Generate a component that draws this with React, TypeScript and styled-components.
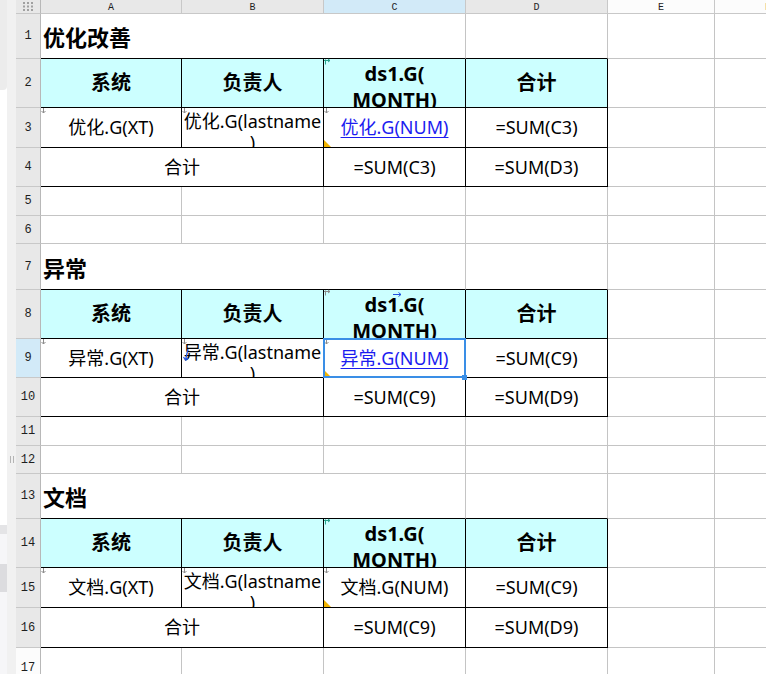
import React from 'react';
import styled, { createGlobalStyle, css } from 'styled-components';

const GlobalStyle = createGlobalStyle`
  html, body {
    margin: 0;
    padding: 0;
    background: #ffffff;
  }
  body {
    font-family: "Noto Sans", "Noto Sans CJK SC", sans-serif;
    color: #000;
  }
`;

const GRID_LINE = '#c4c4c4';
const HEAD_BG = '#e8e8e8';
const ACTIVE_BG = '#d2eaf8';
const CYAN = '#ccffff';
const SELECT = '#3a8ee6';
const LINK = '#1c1cf0';

// row header + A..F
const COL_WIDTHS = [25, 141, 142, 142, 142, 107, 107];
// column header + rows 1..17
const ROW_HEIGHTS = [14, 45, 49, 40, 39, 29, 28, 46, 49, 39, 39, 29, 28, 45, 49, 40, 40, 40];
const COL_NAMES = ['A', 'B', 'C', 'D', 'E', 'F'];

type Kind = 'title' | 'head' | 'data' | 'link' | 'blank';
type MarkKind = 'expand' | 'corner' | 'teal' | 'greyHead' | 'blueRight' | 'blueDown';

interface CellDef {
  text?: string;
  kind: Kind;
  span?: number;
  wrap?: boolean;
  edgeR?: boolean;
  edgeB?: boolean;
  fill?: string;
  marks?: MarkKind[];
  selected?: boolean;
}

const Page = styled.div`
  display: flex;
  width: 766px;
  height: 674px;
  overflow: hidden;
`;

const SidePane = styled.div`
  display: flex;
  flex: 0 0 16px;
`;

const SideEdge = styled.div`
  display: flex;
  flex-direction: column;
  width: 7px;
`;

const SideBlock = styled.div<{ $h?: number; $bg: string; $round?: boolean }>`
  flex: ${p => (p.$h ? `0 0 ${p.$h}px` : '1 1 auto')};
  background: ${p => p.$bg};
  border-bottom-right-radius: ${p => (p.$round ? '4px' : '0')};
`;

const Splitter = styled.div`
  flex: 1;
  background: #f1f1f1;
  display: flex;
  justify-content: center;
  padding-top: 456px;
  box-sizing: border-box;
`;

const Grip = styled.div`
  width: 4px;
  height: 7px;
  box-sizing: border-box;
  border-left: 1px solid #b4b4b4;
  border-right: 1px solid #b4b4b4;
`;

const Sheet = styled.div`
  display: grid;
  grid-template-columns: ${COL_WIDTHS.map(w => `${w}px`).join(' ')};
  grid-template-rows: ${ROW_HEIGHTS.map(h => `${h}px`).join(' ')};
  flex: 0 0 auto;
`;

const HeadCell = styled.div<{ $active?: boolean; $unused?: boolean }>`
  box-sizing: border-box;
  display: flex;
  align-items: center;
  justify-content: center;
  background: ${p => (p.$active ? ACTIVE_BG : p.$unused ? '#fcfcfc' : HEAD_BG)};
  border-right: 1px solid #c8c8c8;
  border-bottom: 1px solid #c8c8c8;
  font-family: "Liberation Mono", "DejaVu Sans Mono", monospace;
  color: #1e1e1e;
`;

const Corner = styled(HeadCell)`
  border-right-color: #b8b8b8;
`;

const ColHead = styled(HeadCell)`
  font-size: 10px;
  padding-top: 1px;
`;

const RowHead = styled(HeadCell)`
  font-size: 12px;
  border-right-color: #b8b8b8;
`;

const Cell = styled.div<{ $span: number; $edgeR: boolean; $edgeB: boolean; $fill: string }>`
  position: relative;
  box-sizing: border-box;
  min-width: 0;
  grid-column: span ${p => p.$span};
  background: ${p => p.$fill};
  border-right: 1px solid ${p => (p.$edgeR ? '#000' : GRID_LINE)};
  border-bottom: 1px solid ${p => (p.$edgeB ? '#000' : GRID_LINE)};
`;

const kindStyles = {
  title: css`
    justify-content: flex-start;
    padding-left: 2px;
    font-size: 22px;
    font-weight: 700;
  `,
  head: css`
    font-size: 20px;
    font-weight: 700;
    line-height: 26px;
  `,
  data: css`
    font-size: 18px;
    line-height: 21px;
  `,
  link: css`
    font-size: 18px;
    line-height: 21px;
    color: ${LINK};
    text-decoration: underline;
    text-underline-offset: 3px;
    text-decoration-thickness: 1px;
  `,
  blank: css``,
};

const Content = styled.div<{ $kind: Kind; $wrap: boolean }>`
  box-sizing: border-box;
  height: 100%;
  overflow: hidden;
  display: flex;
  justify-content: center;
  align-items: ${p => (p.$wrap ? 'flex-start' : 'center')};
  padding-top: ${p => (p.$wrap ? (p.$kind === 'head' ? '2px' : '3px') : '0')};
  white-space: pre;
  text-align: center;
  ${p => kindStyles[p.$kind]}
`;

const Marker = styled.svg<{ $top?: number; $left?: number; $bottom?: number }>`
  position: absolute;
  left: ${p => p.$left ?? 0}px;
  ${p => (p.$bottom !== undefined ? `bottom: ${p.$bottom}px;` : `top: ${p.$top ?? 0}px;`)}
  pointer-events: none;
  overflow: visible;
`;

const Selection = styled.div`
  position: absolute;
  top: -1px;
  left: -1px;
  right: -1px;
  bottom: -1px;
  border: 2px solid ${SELECT};
  z-index: 2;
  pointer-events: none;
`;

const Handle = styled.div`
  position: absolute;
  right: -2px;
  bottom: -3px;
  width: 5px;
  height: 5px;
  background: ${SELECT};
  z-index: 3;
`;

const GridGlyph = () => (
  <svg width="11" height="9" viewBox="0 0 11 9">
    {[0, 4, 8].map(x =>
      [0, 3.5, 7].map(y => <rect key={`${x}-${y}`} x={x} y={y} width="2" height="2" fill="#a0a0a0" />)
    )}
  </svg>
);

const CellMark: React.FC<{ kind: MarkKind }> = ({ kind }) => {
  switch (kind) {
    case 'expand':
      return (
        <Marker width="6" height="6" $top={0} $left={0}>
          <path d="M2.5 0 V5 M0.5 3 L2.5 5 L4.5 3" stroke="#8c8c8c" fill="none" strokeWidth="1" />
        </Marker>
      );
    case 'corner':
      return (
        <Marker width="7" height="7" $bottom={0} $left={0}>
          <polygon points="0,0 0,7 7,7" fill="#f2b400" />
        </Marker>
      );
    case 'teal':
    case 'greyHead': {
      const c = kind === 'teal' ? '#2aa58f' : '#8c8c8c';
      return (
        <Marker width="7" height="6" $top={0} $left={0}>
          <path d="M1.5 0.5 V5.5 M0 1.5 H6 M4 0 L6 1.5 L4 3" stroke={c} fill="none" strokeWidth="1" />
        </Marker>
      );
    }
    case 'blueRight':
      return (
        <Marker width="9" height="5" $top={2} $left={69}>
          <path d="M0 2.5 H8 M5.5 0.5 L8 2.5 L5.5 4.5" stroke="#2050e0" fill="none" strokeWidth="1" />
        </Marker>
      );
    case 'blueDown':
      return (
        <Marker width="7" height="13" $top={10} $left={1}>
          <path d="M5 0 L2.5 11 M0.5 8 L2.5 11 L5 9" stroke="#2050e0" fill="none" strokeWidth="1.2" />
        </Marker>
      );
    default:
      return null;
  }
};

const SheetCell: React.FC<{ cell: CellDef }> = ({ cell }) => (
  <Cell
    $span={cell.span ?? 1}
    $edgeR={!!cell.edgeR}
    $edgeB={!!cell.edgeB}
    $fill={cell.fill ?? '#ffffff'}
  >
    <Content $kind={cell.kind} $wrap={!!cell.wrap}>
      {cell.text && <span>{cell.text}</span>}
    </Content>
    {cell.marks?.map(m => <CellMark key={m} kind={m} />)}
    {cell.selected && (
      <>
        <Selection />
        <Handle />
      </>
    )}
  </Cell>
);

const blank: CellDef = { kind: 'blank' };
const blankRow: CellDef[] = [blank, blank, blank, blank, blank, blank];

interface SectionOpts {
  title: string;
  prefix: string;
  link: boolean;
  sumD: string;
  totalC: string;
  totalD: string;
  headMarks: MarkKind[];
  lastnameMarks?: MarkKind[];
  selected?: boolean;
  blanks: number;
}

const boxed = (c: CellDef): CellDef => ({ ...c, edgeR: true, edgeB: true });

const section = (o: SectionOpts): CellDef[][] => [
  [{ kind: 'title', text: o.title, span: 3, edgeB: true }, { kind: 'blank', edgeB: true }, blank, blank],
  [
    boxed({ kind: 'head', text: '系统', fill: CYAN }),
    boxed({ kind: 'head', text: '负责人', fill: CYAN }),
    boxed({ kind: 'head', text: 'ds1.G(\nMONTH)', wrap: true, fill: CYAN, marks: o.headMarks }),
    boxed({ kind: 'head', text: '合计', fill: CYAN }),
    blank,
    blank,
  ],
  [
    boxed({ kind: 'data', text: `${o.prefix}.G(XT)`, marks: ['expand'] }),
    boxed({
      kind: 'data',
      text: `${o.prefix}.G(lastname\n)`,
      wrap: true,
      marks: ['expand', ...(o.lastnameMarks ?? [])],
    }),
    boxed({
      kind: o.link ? 'link' : 'data',
      text: `${o.prefix}.G(NUM)`,
      marks: ['expand', 'corner'],
      selected: o.selected,
    }),
    boxed({ kind: 'data', text: o.sumD }),
    blank,
    blank,
  ],
  [
    boxed({ kind: 'data', text: '合计', span: 2 }),
    boxed({ kind: 'data', text: o.totalC }),
    boxed({ kind: 'data', text: o.totalD }),
    blank,
    blank,
  ],
  ...Array.from({ length: o.blanks }, () => blankRow),
];

const ROWS: CellDef[][] = [
  ...section({
    title: '优化改善',
    prefix: '优化',
    link: true,
    sumD: '=SUM(C3)',
    totalC: '=SUM(C3)',
    totalD: '=SUM(D3)',
    headMarks: ['teal'],
    blanks: 2,
  }),
  ...section({
    title: '异常',
    prefix: '异常',
    link: true,
    sumD: '=SUM(C9)',
    totalC: '=SUM(C9)',
    totalD: '=SUM(D9)',
    headMarks: ['greyHead', 'blueRight'],
    lastnameMarks: ['blueDown'],
    selected: true,
    blanks: 2,
  }),
  ...section({
    title: '文档',
    prefix: '文档',
    link: false,
    sumD: '=SUM(C9)',
    totalC: '=SUM(C9)',
    totalD: '=SUM(D9)',
    headMarks: ['teal'],
    blanks: 1,
  }),
];

const ACTIVE_ROW = 9;
const ACTIVE_COL = 'C';

export default function App() {
  return (
    <>
      <GlobalStyle />
      <Page>
        <SidePane>
          <SideEdge>
            <SideBlock $h={90} $bg="#ececec" $round />
            <SideBlock $h={435} $bg="#ffffff" />
            <SideBlock $h={9} $bg="#e4e4e6" />
            <SideBlock $h={30} $bg="#f6f6f8" />
            <SideBlock $h={28} $bg="#dcdcdf" />
            <SideBlock $bg="#f6f6f8" />
          </SideEdge>
          <Splitter>
            <Grip />
          </Splitter>
        </SidePane>
        <Sheet>
          <Corner>
            <GridGlyph />
          </Corner>
          {COL_NAMES.map(name => (
            <ColHead key={name} $active={name === ACTIVE_COL} $unused={name === 'E' || name === 'F'}>
              {name}
            </ColHead>
          ))}
          {ROWS.map((row, i) => (
            <React.Fragment key={i}>
              <RowHead $active={i + 1 === ACTIVE_ROW} $unused={i + 1 > 16}>
                {i + 1}
              </RowHead>
              {row.map((cell, j) => (
                <SheetCell key={j} cell={cell} />
              ))}
            </React.Fragment>
          ))}
        </Sheet>
      </Page>
    </>
  );
}
